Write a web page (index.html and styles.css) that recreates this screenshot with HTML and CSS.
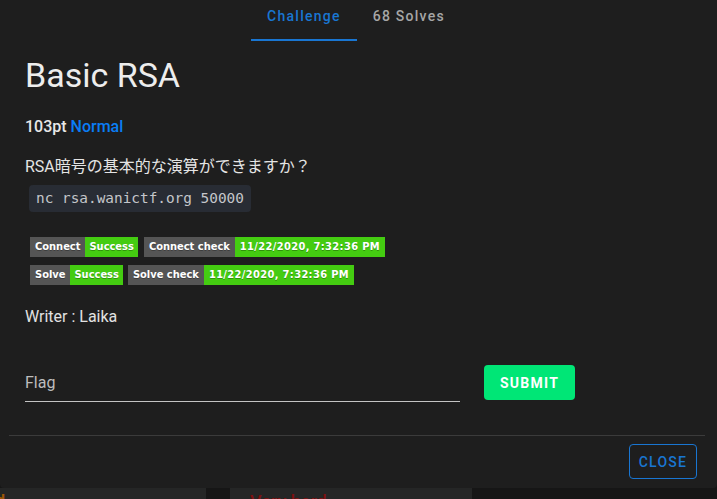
FILE: index.html
```html
<!DOCTYPE html>
<html lang="ja">
<head>
<meta charset="utf-8">
<title>Basic RSA</title>
<link rel="stylesheet" href="styles.css">
</head>
<body>
<div class="dialog">
  <div class="tabs">
    <div class="tab active">Challenge</div>
    <div class="tab">68 Solves</div>
  </div>
  <div class="content">
    <h1 class="title">Basic RSA</h1>
    <div class="meta">103pt <span class="level">Normal</span></div>
    <p class="desc">RSA暗号の基本的な演算ができますか？</p>
    <code class="cmd">nc rsa.wanictf.org 50000</code>
    <div class="badges">
      <span class="badge"><span class="lbl">Connect</span><span class="val">Success</span></span>
      <span class="badge"><span class="lbl">Connect check</span><span class="val date">11/22/2020, 7:32:36 PM</span></span>
    </div>
    <div class="badges second">
      <span class="badge"><span class="lbl">Solve</span><span class="val">Success</span></span>
      <span class="badge"><span class="lbl">Solve check</span><span class="val date">11/22/2020, 7:32:36 PM</span></span>
    </div>
    <div class="writer">Writer : Laika</div>
    <div class="flag-row">
      <div class="field"><span class="placeholder">Flag</span></div>
      <button class="submit">SUBMIT</button>
    </div>
  </div>
  <div class="divider"></div>
  <div class="actions">
    <button class="close">CLOSE</button>
  </div>
</div>
<div class="behind">
  <div class="card c1"><span class="hard">d</span></div>
  <div class="gap"></div>
  <div class="card c2"><span class="vhard">Very hard</span></div>
</div>
</body>
</html>
```
FILE: styles.css
```css
html, body {
  margin: 0;
  padding: 0;
  background: #161616;
  overflow: hidden;
}
body {
  font-family: Roboto, "Noto Sans CJK JP", sans-serif;
  color: #e6e6e6;
  width: 717px;
  height: 499px;
}
.dialog {
  background: #1e1e1e;
  height: 488px;
  box-sizing: border-box;
  border-radius: 0 0 4px 4px;
  display: flex;
  flex-direction: column;
}
.tabs {
  display: flex;
  justify-content: center;
  padding-right: 5px;
}
.tab {
  box-sizing: border-box;
  height: 41px;
  padding: 8px 16px 0;
  font-size: 14px;
  line-height: 16px;
  font-weight: 500;
  letter-spacing: 0.0893em;
  color: #a6a6a6;
  border-bottom: 2px solid transparent;
}
.tab.active {
  color: #1976d2;
  border-bottom-color: #1976d2;
}
.content {
  padding: 0 25px;
  display: flex;
  flex-direction: column;
  align-items: flex-start;
}
.title {
  margin: 14px 0 0;
  font-size: 34px;
  line-height: 40px;
  font-weight: 400;
  color: #ededed;
}
.meta {
  margin-top: 20px;
  font-size: 16px;
  line-height: 24px;
  font-weight: 500;
  color: #e8e8e8;
}
.level {
  color: #0a7df5;
}
.desc {
  margin: 16px 0 0;
  font-size: 16px;
  line-height: 24px;
  color: #e4e4e4;
}
.cmd {
  margin: 6px 0 0 4px;
  height: 27px;
  line-height: 27px;
  padding: 0 7px;
  background: #282c34;
  border-radius: 4px;
  font-family: "DejaVu Sans Mono", monospace;
  font-size: 14.4px;
  color: #c4c6ca;
}
.badges {
  margin: 25px 0 0 5px;
  display: flex;
  gap: 6px;
}
.badges.second {
  margin-top: 8px;
  gap: 5px;
}
.badge {
  display: flex;
  height: 20px;
  font-family: "DejaVu Sans Condensed", "DejaVu Sans", sans-serif;
  font-stretch: condensed;
  font-size: 11px;
  font-weight: 700;
  line-height: 20px;
  color: #fff;
  text-shadow: 0 1px 0 rgba(1, 1, 1, 0.3);
}
.lbl {
  background: #555;
  padding: 0 5px;
}
.val {
  background: #44cc11;
  padding: 0 4px;
}
.val.date {
  padding: 0 5px;
  letter-spacing: 0.35px;
}
.writer {
  margin-top: 20px;
  font-size: 16px;
  line-height: 24px;
  font-weight: 400;
  color: #e2e2e2;
}
.flag-row {
  margin-top: 36px;
  display: flex;
  align-items: flex-start;
  gap: 24px;
}
.field {
  width: 435px;
  box-sizing: border-box;
  padding: 6px 0 6px;
  line-height: 24px;
  font-size: 16px;
  border-bottom: 1px solid #c4c4c4;
}
.placeholder {
  color: #bdbdbd;
}
.submit {
  width: 91px;
  height: 35px;
  border: none;
  border-radius: 4px;
  background: #00e676;
  color: #fff;
  font-family: Roboto, sans-serif;
  font-size: 14px;
  font-weight: 700;
  letter-spacing: 0.0893em;
  padding: 0;
}
.divider {
  margin: 33px 12px 0 9px;
  height: 1px;
  background: #3b3b3b;
}
.actions {
  display: flex;
  justify-content: flex-end;
  padding: 8px 20px 0;
}
.close {
  width: 68px;
  height: 35px;
  box-sizing: border-box;
  border: 1px solid #1976d2;
  border-radius: 4px;
  background: transparent;
  color: #1976d2;
  font-family: Roboto, sans-serif;
  font-size: 14px;
  font-weight: 500;
  letter-spacing: 0.0893em;
  padding: 0;
}
.behind {
  display: flex;
  height: 11px;
  overflow: hidden;
}
.card {
  background: #252626;
  height: 30px;
  position: relative;
  overflow: hidden;
}
.c1 { width: 206px; }
.gap { width: 24px; }
.c2 { width: 242px; }
.hard {
  display: block;
  margin-left: -4px;
  padding-top: 3px;
  font-size: 16px;
  font-weight: 700;
  color: #9e5606;
}
.vhard {
  display: block;
  margin-left: 20px;
  padding-top: 3px;
  font-size: 18px;
  font-weight: 500;
  color: #7e1010;
}
```
